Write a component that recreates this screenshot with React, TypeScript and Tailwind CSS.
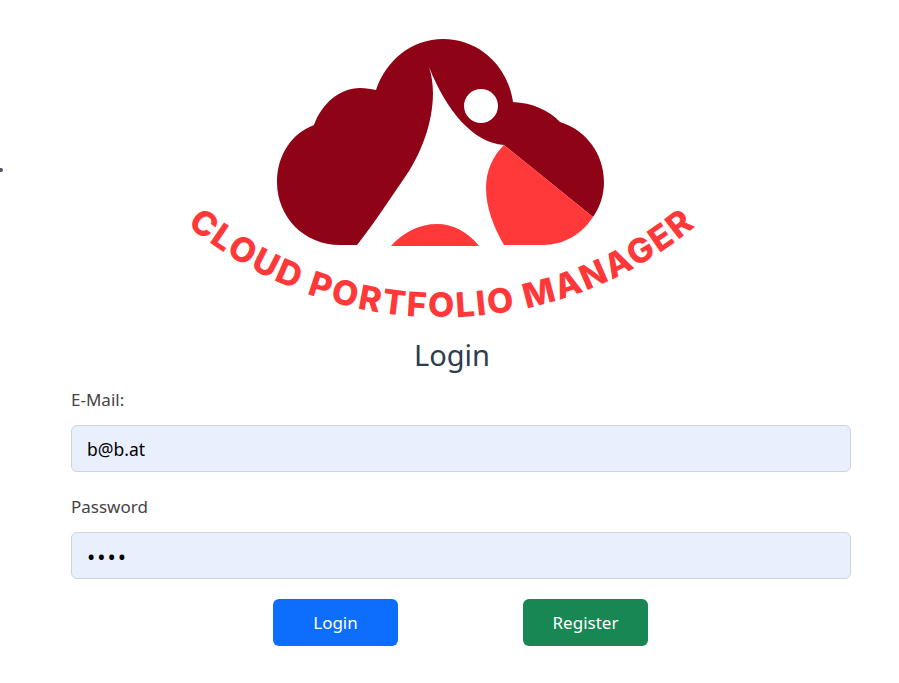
export default function App() {
  return (
    <div className="relative min-h-[683px] bg-white font-['Noto_Sans',sans-serif] text-[#212529]">
      <span className="absolute left-0 top-[168px] h-[4px] w-[3px] rounded-r-sm bg-[#556]" />
      <div className="flex justify-center pt-[30px]">
        <svg viewBox="185 30 530 300" className="block h-[300px] w-[530px]">
          <path
            fill="#8f0316"
            d="M357 245 L340 245 C304 245 277 217 277 182 C277 155 292 133 314 125 C322 103 340 88 360 88 C366 88 371 89 376 90 C386 60 412 39 443 39 C479 39 508 66 513 102 C532 103 549 110 560 122 C586 130 604 154 604 182 C604 195 600 207 593 217 L504 145 C473 143 446 110 429 67 C440 100 427 147 403 180 C388 202 372 226 357 245 Z"
          />
          <path
            fill="#ff3939"
            d="M504 145 L593 217 C582 234 564 245 543 245 L504 245 C494 228 486 208 486 188 C486 170 493 156 504 145 Z"
          />
          <path fill="#ff3939" d="M391 246 C403 232 420 224 437 224 C453 224 468 232 479 246 Z" />
          <circle cx="481" cy="106" r="17" fill="#fff" />
          <path id="logo-arc" fill="none" d="M 180 219 A 398 398 0 0 0 704 219" />
          <text
            fill="#ff3939"
            fontFamily="Inter, sans-serif"
            fontWeight="800"
            fontSize="34"
            letterSpacing="2"
          >
            <textPath href="#logo-arc" startOffset="50%" textAnchor="middle">
              CLOUD PORTFOLIO MANAGER
            </textPath>
          </text>
        </svg>
      </div>
      <h3 className="mt-[8px] ml-[5px] text-center text-[29px] leading-[34px] text-[#2c3e50]">Login</h3>
      <form className="ml-[71px] mr-[48px] mt-[16px] flex flex-col">
        <label className="text-[17px] leading-6 text-[#444]">E-Mail:</label>
        <input
          readOnly
          type="email"
          value="b@b.at"
          className="mt-[13px] h-[47px] w-full rounded-md border border-[#ced4da] bg-[#e8f0fe] px-[15px] text-[17.5px] text-black outline-none"
        />
        <label className="mt-[23px] text-[17px] leading-6 text-[#444]">Password</label>
        <input
          readOnly
          type="password"
          value="1234"
          className="mt-[13px] h-[47px] w-full rounded-md border border-[#ced4da] bg-[#e8f0fe] px-[15px] text-[22px] tracking-[2px] text-black outline-none"
        />
        <div className="mt-[20px] ml-[202px] flex gap-[125px]">
          <button type="button" className="h-[47px] w-[125px] rounded-md bg-[#0d6efd] text-[17px] text-white">Login</button>
          <button type="button" className="h-[47px] w-[125px] rounded-md bg-[#198754] text-[17px] text-white">Register</button>
        </div>
      </form>
    </div>
  );
}
